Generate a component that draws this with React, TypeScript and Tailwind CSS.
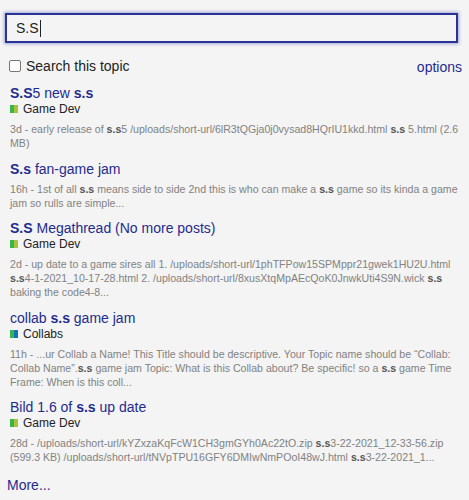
type Part = string | { b: string };

type Result = {
  title: Part[];
  category?: { name: string; parent: string; color: string };
  lines: Part[][];
};

const gameDev = { name: 'Game Dev', parent: '#3ab54a', color: '#a6c33b' };
const collabs = { name: 'Collabs', parent: '#3ab54a', color: '#0e76bd' };

// blurb lines are broken where the reference breaks them
const results: Result[] = [
  {
    title: [{ b: 'S.S' }, '5 new ', { b: 's.s' }],
    category: gameDev,
    lines: [
      [
        '3d - early release of ',
        { b: 's.s' },
        '5 /uploads/short-url/6lR3tQGja0j0vysad8HQrIU1kkd.html ',
        { b: 's.s' },
        ' 5.html (2.6',
      ],
      ['MB)'],
    ],
  },
  {
    title: [{ b: 'S.s' }, ' fan-game jam'],
    lines: [
      [
        '16h - 1st of all ',
        { b: 's.s' },
        ' means side to side 2nd this is who can make a ',
        { b: 's.s' },
        ' game so its kinda a game',
      ],
      ['jam so rulls are simple...'],
    ],
  },
  {
    title: [{ b: 'S.S' }, ' Megathread (No more posts)'],
    category: gameDev,
    lines: [
      ['2d - up date to a game sires all 1. /uploads/short-url/1phTFPow15SPMppr21gwek1HU2U.html'],
      [
        { b: 's.s' },
        '4-1-2021_10-17-28.html 2. /uploads/short-url/8xusXtqMpAEcQoK0JnwkUti4S9N.wick ',
        { b: 's.s' },
      ],
      ['baking the code4-8...'],
    ],
  },
  {
    title: ['collab ', { b: 's.s' }, ' game jam'],
    category: collabs,
    lines: [
      ['11h - ...ur Collab a Name! This Title should be descriptive. Your Topic name should be \u201cCollab:'],
      [
        'Collab Name\u201d.',
        { b: 's.s' },
        ' game jam Topic: What is this Collab about? Be specific! so a ',
        { b: 's.s' },
        ' game Time',
      ],
      ['Frame: When is this coll...'],
    ],
  },
  {
    title: ['Bild 1.6 of ', { b: 's.s' }, ' up date'],
    category: gameDev,
    lines: [
      ['28d - /uploads/short-url/kYZxzaKqFcW1CH3gmGYh0Ac22tO.zip ', { b: 's.s' }, '3-22-2021_12-33-56.zip'],
      ['(599.3 KB) /uploads/short-url/tNVpTPU16GFY6DMIwNmPOoI48wJ.html ', { b: 's.s' }, '3-22-2021_1...'],
    ],
  },
];

function Text({ parts, boldClass }: { parts: Part[]; boldClass?: string }) {
  return (
    <>
      {parts.map((p, i) =>
        typeof p === 'string' ? (
          <span key={i}>{p}</span>
        ) : (
          <strong key={i} className={boldClass ?? 'font-bold'}>
            {p.b}
          </strong>
        )
      )}
    </>
  );
}

export default function App() {
  return (
    <div
      className="min-h-[500px] w-[469px] overflow-hidden bg-[#f4f4f4] pl-[5px] pr-[7px] pt-[13px]"
      style={{ fontFamily: '"Liberation Sans", Arial, sans-serif' }}
    >
      <div className="flex h-[30px] w-[453px] items-center border-2 border-[#2b3494] bg-[#f4f4f4] pl-[9px] text-[14px] text-[#222] shadow-[0_0_3px_1px_rgba(60,70,180,0.45)]">
        <span>S.S</span>
        <span className="ml-px h-[17px] w-px bg-[#222]" />
      </div>

      <div className="mt-[14px] flex h-[18px] items-center justify-between pl-[4px]">
        <label className="flex items-center gap-[5px] text-[14px] text-[#222]">
          <span className="h-[12px] w-[12px] rounded-[2px] border border-[#777] bg-white" />
          Search this topic
        </label>
        <a className="mt-[3px] text-[14px] text-[#1f2b8f]">options</a>
      </div>

      <div className="mt-[10px] flex flex-col gap-[10.5px] pl-[5px]">
        {results.map((r, i) => (
          <div key={i}>
            <div className="text-[14px] leading-[16px] text-[#1f2b8f]">
              <Text parts={r.title} />
            </div>
            {r.category && (
              <div className="flex items-center gap-[5px] text-[12px] leading-[16px] text-[#222]">
                <span className="flex h-[8px] w-[8px]">
                  <span className="h-full w-1/2" style={{ backgroundColor: r.category.parent }} />
                  <span className="h-full w-1/2" style={{ backgroundColor: r.category.color }} />
                </span>
                {r.category.name}
              </div>
            )}
            <div className="mt-[5px] text-[10.6px] leading-[14px] text-[#828282]">
              {r.lines.map((line, j) => (
                <div key={j} className="whitespace-nowrap">
                  <Text parts={line} boldClass="font-bold text-[#555]" />
                </div>
              ))}
            </div>
          </div>
        ))}
      </div>

      <a className="mt-[13px] block pl-[2px] text-[14px] leading-[16px] text-[#1f2b8f]">More...</a>
    </div>
  );
}
